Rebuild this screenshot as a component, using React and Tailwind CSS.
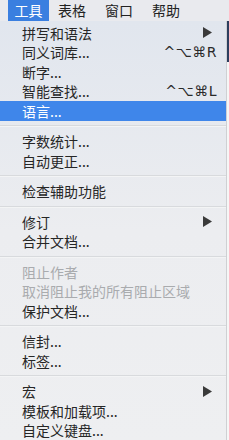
import React from "react";

const groups = [
  [
    { t: "拼写和语法", arrow: true },
    { t: "同义词库...", k: "^⌥⌘R" },
    { t: "断字..." },
    { t: "智能查找...", k: "^⌥⌘L" },
    { t: "语言...", active: true },
  ],
  [{ t: "字数统计..." }, { t: "自动更正..." }],
  [{ t: "检查辅助功能" }],
  [{ t: "修订", arrow: true }, { t: "合并文档..." }],
  [
    { t: "阻止作者", dis: true },
    { t: "取消阻止我的所有阻止区域", dis: true },
    { t: "保护文档..." },
  ],
  [{ t: "信封..." }, { t: "标签..." }],
  [{ t: "宏", arrow: true }, { t: "模板和加载项..." }, { t: "自定义键盘..." }],
];

function Row({ item }) {
  const color = item.active
    ? "bg-[#3f86ea] text-white"
    : item.dis
    ? "text-[#a9abae]"
    : "text-[#262626]";
  return (
    <div className={`flex h-[19.5px] items-center pl-[22px] pr-[9px] ${color}`}>
      <span className="flex-1 text-[14px] leading-none whitespace-nowrap">{item.t}</span>
      {item.k && (
        <span className="text-[14px] leading-none tracking-[0.5px] text-[#2a2a2a] font-['DejaVu_Sans',sans-serif] whitespace-nowrap">
          {item.k}
        </span>
      )}
      {item.arrow && (
        <svg width="9" height="11" viewBox="0 0 9 11" className="mr-[5px]">
          <path d="M0 0 L9 5.5 L0 11 Z" fill="#3a3a3a" />
        </svg>
      )}
    </div>
  );
}

export default function App() {
  return (
    <div className="w-[229px] h-[440px] overflow-hidden bg-white font-['Noto_Sans_CJK_SC','DejaVu_Sans',sans-serif] flex flex-col">
      <div className="flex h-[22px] items-center bg-[#e9eaee] text-[14px] text-[#222] whitespace-nowrap">
        <div className="ml-[8px] h-full w-[41px] bg-[#3a7fe0] text-white flex items-center justify-center">工具</div>
        <div className="ml-[9px]">表格</div>
        <div className="ml-[19px]">窗口</div>
        <div className="ml-[19px]">帮助</div>
      </div>
      <div className="flex flex-1">
        <div className="w-[226px] bg-gradient-to-b from-[#e1e6ee] via-[#ecedf0] to-[#eeeff1] pt-[2px] flex flex-col">
          {groups.map((g, gi) => (
            <React.Fragment key={gi}>
              {gi > 0 && (
                <div className="h-[11px] flex items-center">
                  <div className="h-[2px] w-full bg-[#d8dadd] border-b border-white/70" />
                </div>
              )}
              {g.map((it, i) => (
                <Row key={i} item={it} />
              ))}
            </React.Fragment>
          ))}
        </div>
        <div className="flex-1 flex flex-col bg-[#f6f6f6] border-l border-[#cfd0d3]">
          <div className="h-[41px] bg-[#2c3e5e]" />
        </div>
      </div>
    </div>
  );
}
